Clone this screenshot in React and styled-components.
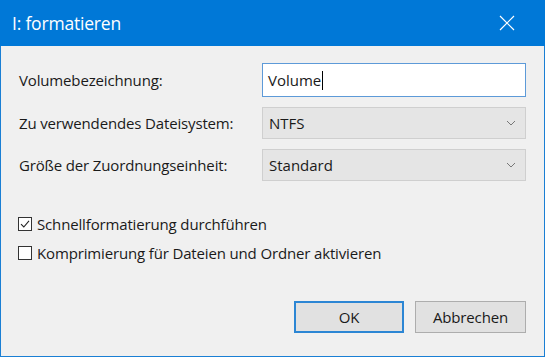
import styled, { createGlobalStyle } from 'styled-components';

const GlobalStyle = createGlobalStyle`
  html, body {
    margin: 0;
    padding: 0;
    background: #f0f0f0;
  }
  * {
    box-sizing: border-box;
  }
`;

const Window = styled.div`
  width: 545px;
  height: 357px;
  display: flex;
  flex-direction: column;
  background: #f0f0f0;
  border: 1px solid #1a7fd4;
  border-top: none;
  font-family: 'Open Sans', 'Liberation Sans', sans-serif;
  color: #1a1a1a;
`;

const TitleBar = styled.header`
  height: 46px;
  flex: none;
  display: flex;
  align-items: center;
  justify-content: space-between;
  background: #0078d7;
  color: #fff;
  padding: 0 30px 0 12px;
  margin: 0 -1px;
`;

const Title = styled.h1`
  margin: 0;
  font-size: 17.5px;
  font-weight: 400;
  letter-spacing: -0.2px;
`;

const Body = styled.main`
  flex: 1;
  display: flex;
  flex-direction: column;
  padding: 17px 17px 0 18px;
  font-size: 15px;
  letter-spacing: -0.15px;
`;

const Form = styled.div`
  display: grid;
  grid-template-columns: 243px 264px;
  row-gap: 10px;
  align-items: center;
`;

const Label = styled.label``;

const TextBox = styled.div`
  height: 34px;
  display: flex;
  align-items: center;
  padding-left: 5px;
  background: #fff;
  border: 1px solid #5d9ad8;
  letter-spacing: 0;
`;

const Caret = styled.span`
  display: inline-block;
  width: 1px;
  height: 19px;
  background: #000;
  margin-left: 1px;
`;

const Combo = styled.div`
  height: 32px;
  display: flex;
  align-items: center;
  justify-content: space-between;
  padding: 0 9px 0 6px;
  background: #e5e5e5;
  border: 1px solid #cfcfcf;
  letter-spacing: 0;
`;

const Options = styled.div`
  display: flex;
  flex-direction: column;
  gap: 9px;
  margin: 33px 0 0 -1px;
`;

const CheckRow = styled.div`
  display: flex;
  align-items: center;
  gap: 5px;
  height: 20px;
`;

const Box = styled.span`
  width: 14px;
  height: 14px;
  flex: none;
  display: flex;
  align-items: center;
  justify-content: center;
  background: #fff;
  border: 1px solid #333;
`;

const Buttons = styled.div`
  display: flex;
  justify-content: flex-end;
  gap: 11px;
  margin-top: 38px;
  padding-right: 1px;
`;

const Button = styled.button`
  width: ${(p) => (p.primary ? '110px' : '111px')};
  height: 32px;
  font-family: inherit;
  font-size: 15px;
  letter-spacing: -0.15px;
  color: #1a1a1a;
  background: #e1e1e1;
  border: ${(p) => (p.primary ? '2px solid #2c86d4' : '1px solid #adadad')};
  padding: 0;
`;

function Chevron() {
  return (
    <svg width="10" height="6" viewBox="0 0 10 6">
      <path d="M1 1 L5 5 L9 1" fill="none" stroke="#777" strokeWidth="1" />
    </svg>
  );
}

function Checkbox({ checked, children }) {
  return (
    <CheckRow>
      <Box>
        {checked && (
          <svg width="10" height="10" viewBox="0 0 10 10">
            <path d="M1 5.2 L3.8 8 L9 1.8" fill="none" stroke="#222" strokeWidth="1.1" />
          </svg>
        )}
      </Box>
      <span>{children}</span>
    </CheckRow>
  );
}

export default function App() {
  return (
    <>
      <GlobalStyle />
      <Window>
        <TitleBar>
          <Title>I: formatieren</Title>
          <svg width="16" height="16" viewBox="0 0 16 16">
            <path d="M1 1 L15 15 M15 1 L1 15" stroke="#fff" strokeWidth="1.2" />
          </svg>
        </TitleBar>
        <Body>
          <Form>
            <Label>Volumebezeichnung:</Label>
            <TextBox>
              Volume
              <Caret />
            </TextBox>
            <Label>Zu verwendendes Dateisystem:</Label>
            <Combo>
              NTFS
              <Chevron />
            </Combo>
            <Label>Größe der Zuordnungseinheit:</Label>
            <Combo>
              Standard
              <Chevron />
            </Combo>
          </Form>
          <Options>
            <Checkbox checked>Schnellformatierung durchführen</Checkbox>
            <Checkbox>Komprimierung für Dateien und Ordner aktivieren</Checkbox>
          </Options>
          <Buttons>
            <Button primary>OK</Button>
            <Button>Abbrechen</Button>
          </Buttons>
        </Body>
      </Window>
    </>
  );
}
